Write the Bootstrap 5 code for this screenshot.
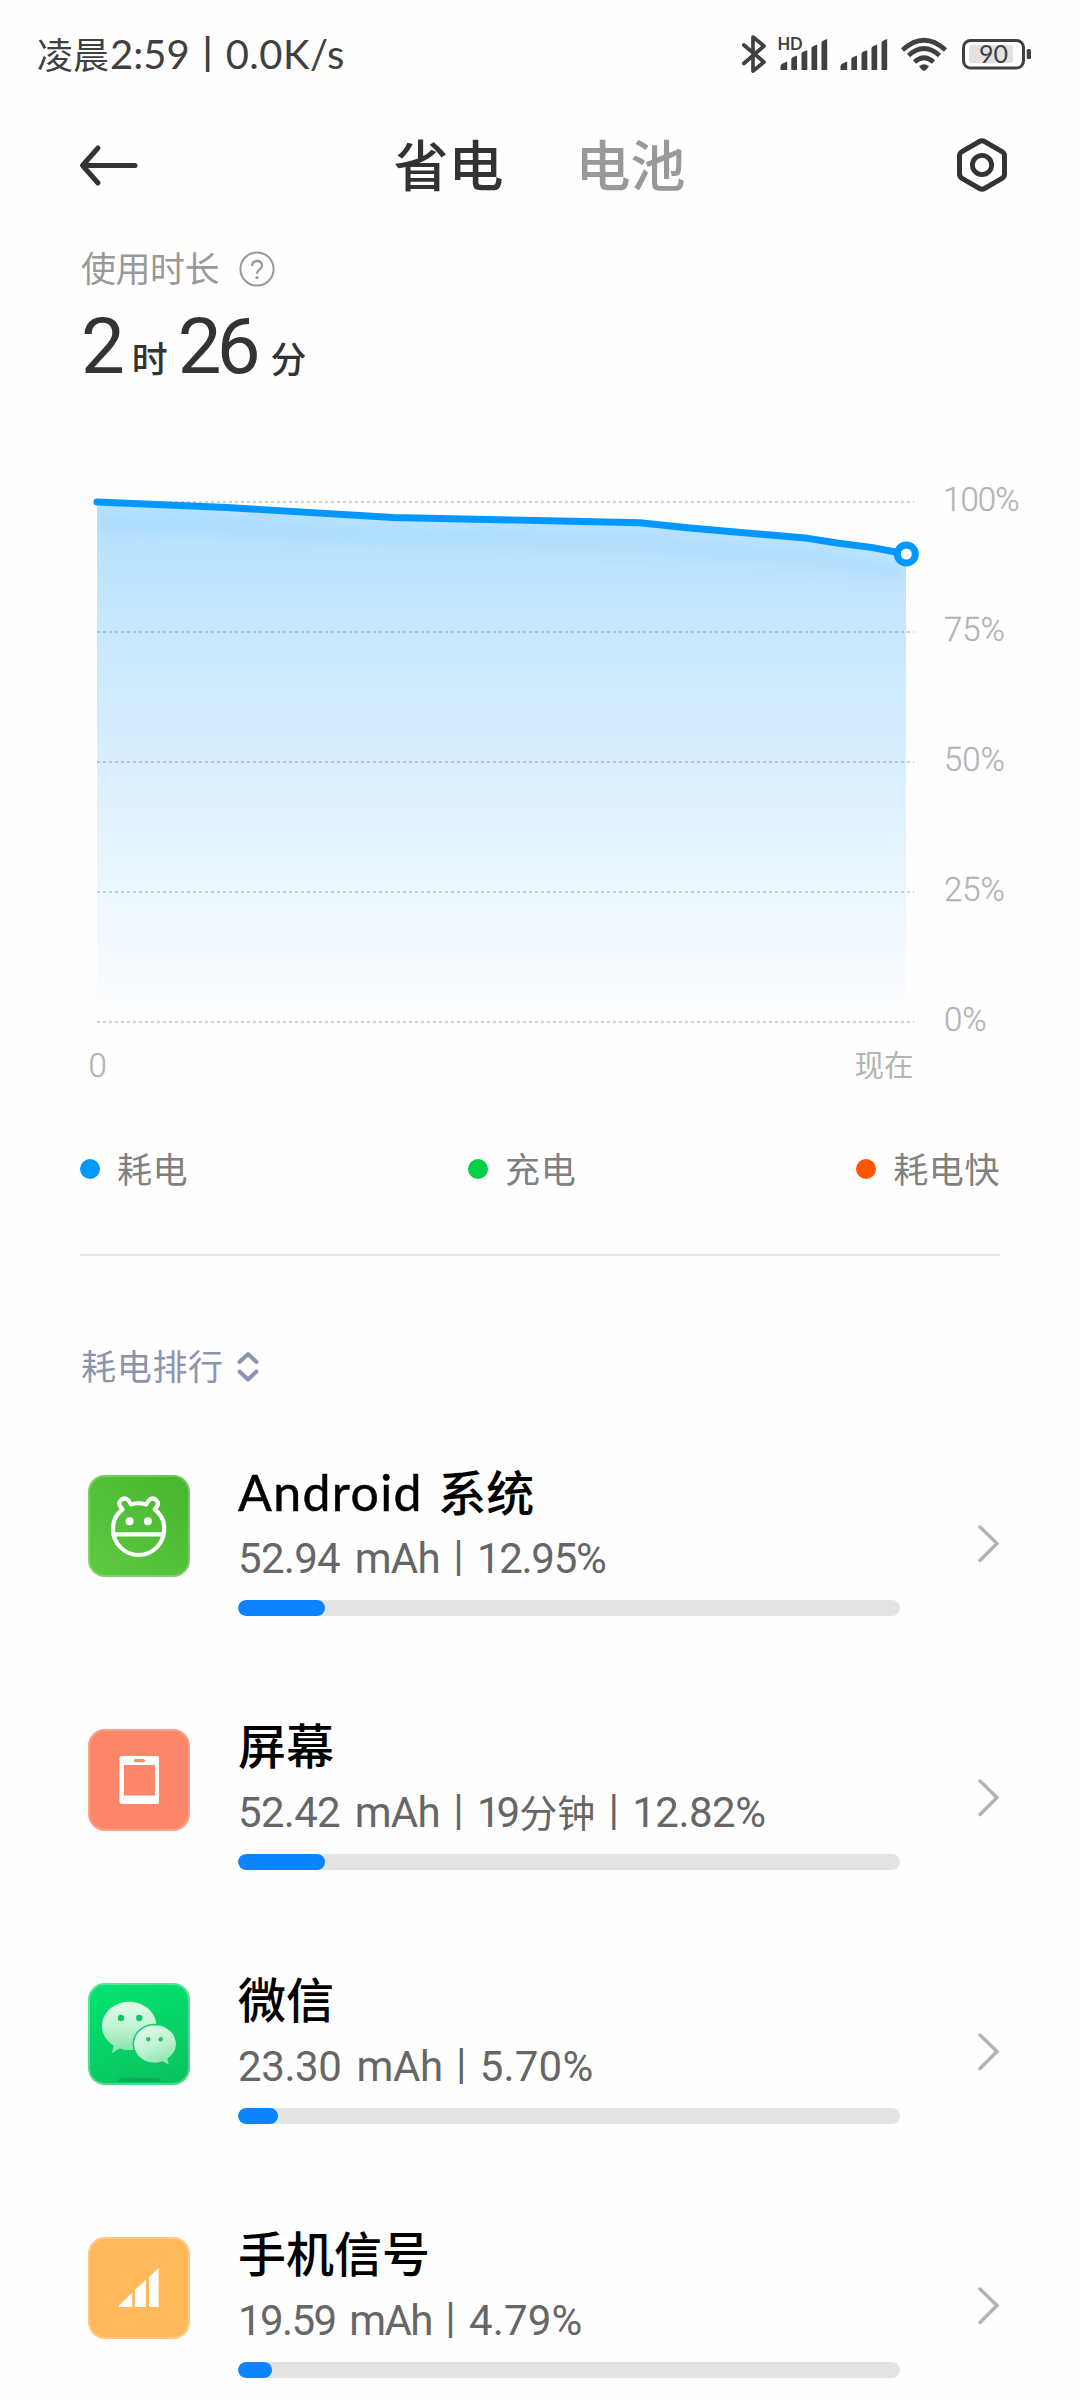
<!DOCTYPE html>
<html lang="zh-CN">
<head>
<meta charset="utf-8">
<meta name="viewport" content="width=device-width, initial-scale=1">
<title>省电</title>
<link href="https://cdn.jsdelivr.net/npm/bootstrap@5.3.0/dist/css/bootstrap.min.css" rel="stylesheet">
<style>
body{background:#fefefe;color:#333;font-family:Lato,"Noto Sans CJK SC",sans-serif;font-weight:400}
svg{display:block;flex:none}
.screen{width:1080px;height:2400px;white-space:nowrap}
.status{height:108px;padding:0 48px 0 37px;font-size:40px;color:#404040}
.status .cn{font-size:36px;margin-right:1px}
.status .rate{letter-spacing:.5px}
.pipe{display:inline-block;width:37px;text-align:center;font-family:Roboto,sans-serif;font-size:43px;font-weight:400;line-height:1;vertical-align:3px;letter-spacing:0}
.status .pipe{width:36px;font-weight:500}
.head{height:114px;padding:0 72px 0 79px;color:#333}
.tabs{font-size:55px;font-weight:500;gap:72px;line-height:114px;margin-right:16px}
.tab-off{color:#999}
.usage{padding:26px 80px 0 81px;font-size:35px;color:#999}
.usage .line{height:41px;line-height:41px;gap:20px;letter-spacing:-.5px}
.total{height:109px;line-height:109px;padding-left:81px;font-size:78px;color:#333}
.total .unit{font-size:36px;font-weight:500}
.total .hour{margin:0 10px 0 12px}
.total .mins,.total .h-num{font-family:Roboto,sans-serif}
.total .mins{letter-spacing:-5px;margin-right:15px}
.total .h-num{letter-spacing:-5px}
.axis{font-family:Roboto,"Noto Sans CJK SC",sans-serif;font-size:33px;fill:#b3b3b3;font-weight:300;stroke:#b3b3b3;stroke-width:.3px;letter-spacing:-.9px}
.axis .two{letter-spacing:-.1px}
.axis .now{font-size:29.5px;stroke:none;letter-spacing:0;font-weight:400}
.legend{height:142px;margin:0 80px;font-size:35px;color:#808080;letter-spacing:.6px}
.legend .gap-key{gap:17px}
.dot{width:20px;height:20px;border-radius:50%;margin-top:-1px}
.rule{height:2px;margin:14px 80px 0;background:#e5e5e5}
.rank{padding:80px 81px 20px;font-size:35px;color:#8c93b1}
.rank .line{height:61px;line-height:61px;gap:13px;letter-spacing:.7px}
.app{height:254px;padding:0 80px 0 88px}
.tile{margin-top:58px}
.info{width:662px;margin:43px 0 0 48px}
.name{height:64px;line-height:64px;font-size:48px;font-weight:500;color:#000}
.name .en{font-size:50px;letter-spacing:1.4px;word-spacing:1px;font-weight:400;-webkit-text-stroke:.5px #000}
.detail{height:65px;line-height:67px;font-size:42px;color:#666}
.num{font-family:Roboto,"Noto Sans CJK SC",sans-serif}
.mah{letter-spacing:-.7px;word-spacing:5px}
.mah.loose{letter-spacing:-.4px}
.mah.tight{letter-spacing:-1.6px}
.pct{letter-spacing:-1.3px}
.pct.mid{letter-spacing:-.5px}
.pct.wide{letter-spacing:.2px}
.mins19{letter-spacing:-4px;margin-right:3px}
.detail .cn{font-size:38px;letter-spacing:0}
.app .progress{height:16px;margin-top:11px;background:#e3e3e3;border-radius:8px}
.app .progress-bar{background:#0d84ff;border-radius:8px}
</style>
</head>
<body>
<div class="screen overflow-hidden d-flex flex-column">
  <div class="status d-flex align-items-center justify-content-between flex-shrink-0">
    <div><span class="cn">凌晨</span><span>2:59</span><span class="pipe">|</span><span class="rate">0.0K/s</span></div>
    <svg width="292" height="44" viewBox="740 32 292 44">
      <g fill="none" stroke="#404040" stroke-linecap="round" stroke-linejoin="round">
        <path stroke-width="3.7" d="M743.8 45 764 62 753 71V37L764 46 743.8 63.5"/>
      </g>
      <text x="777.5" y="50" font-size="16.5" font-weight="700" textLength="25" fill="#404040">HD</text>
      <g id="bars" fill="#404040">
        <path d="M780.5 66.5q0-2 2-3l4.700-2v8.500h-6.700z"/>
        <path d="M791.300 59.500q0-1.500 1.500-2.300l4.200-1.700V70h-5.700z"/>
        <path d="M801.500 54q0-1.500 1.500-2.200l4.300-1.500V70h-5.800z"/>
        <path d="M811.500 48.500q0-1.500 1.500-2.200l4.200-1.800V70h-5.700z"/>
        <path d="M821.500 43q0-1.500 1.500-2.300l4.200-1.700V70h-5.700z"/>
      </g>
      <use href="#bars" x="60"/>
      <g fill="none" stroke="#404040" stroke-width="4.600">
        <path d="M902.500 50Q924 30.500 945.500 50"/>
        <path d="M908.500 55.500Q924 41.500 939.500 55.500"/>
        <path d="M914.500 62Q924 53.500 933.500 62"/>
      </g>
      <path fill="#404040" d="M919 66.500q5-4.500 10 0l-3.500 3.700q-1.500 1.300-3 0z"/>
      <rect x="963.500" y="40.500" width="60" height="27.500" rx="7" fill="none" stroke="#404040" stroke-width="3"/>
      <rect x="969" y="45" width="44" height="18" rx="3" fill="#e2e2e2"/>
      <rect x="1026.700" y="49" width="4.300" height="10" rx="1.500" fill="#404040"/>
      <text x="979" y="63" font-size="25" textLength="29" fill="#404040">90</text>
    </svg>
  </div>
  <div class="head d-flex align-items-center justify-content-between flex-shrink-0">
    <svg width="60" height="44" viewBox="79 143 60 44"><path d="M135 165.500H83M98 148 82.500 165.500 98 183" fill="none" stroke="#333" stroke-width="5" stroke-linecap="round" stroke-linejoin="round"/></svg>
    <div class="tabs d-flex"><span>省电</span><span class="tab-off">电池</span></div>
    <svg width="52" height="58" viewBox="956 136 52 58"><path d="M979.500 141.500q2.500-1.400 5 0l17.500 10.200q2.500 1.500 2.500 4v18.600q0 2.500-2.500 4L984.500 188.500q-2.500 1.400-5 0l-17.500-10.200q-2.500-1.500-2.500-4v-18.600q0-2.500 2.500-4z" fill="none" stroke="#333" stroke-width="5"/><circle cx="982" cy="165" r="9.600" fill="none" stroke="#333" stroke-width="4.800"/></svg>
  </div>
  <div class="usage flex-shrink-0">
    <div class="line d-flex align-items-center"><span>使用时长</span>
      <svg width="36" height="36" viewBox="0 0 36 36"><circle cx="18" cy="18" r="16.600" fill="none" stroke="#999" stroke-width="2"/><path d="M13.200 15q0-5 4.800-5t5 4.500c0 4-5 4-5 8.300" fill="none" stroke="#999" stroke-width="2.300"/><circle cx="18" cy="26.500" r="1.600" fill="#999"/></svg>
    </div>
  </div>
  <div class="total flex-shrink-0"><span class="h-num">2</span><span class="unit hour">时</span><span class="mins">26</span><span class="unit">分</span></div>

  <svg width="1080" height="700" viewBox="0 398 1080 700">
    <defs>
      <linearGradient id="fade" x1="0" y1="502" x2="0" y2="1022" gradientUnits="userSpaceOnUse"><stop stop-color="#0097ff" stop-opacity=".29"/><stop offset="1" stop-color="#0097ff" stop-opacity="0"/></linearGradient>
      <filter id="soft" x="-10%" y="-100%" width="120%" height="300%"><feGaussianBlur stdDeviation="6"/></filter>
      <clipPath id="area"><path id="areaShape" d="M97 502 227 507.500 393 517.500 560 521 640 522.700 690 528 808 538.300 837 543 873 547.700 906 554V1022H97z"/></clipPath>
    </defs>
    <path d="M97 502H914M97 632H914M97 762H914M97 892H914M97 1022H914" stroke="#000" stroke-opacity=".18" stroke-width="2" stroke-dasharray="3 3"/>
    <use href="#areaShape" fill="url(#fade)"/>
    <g clip-path="url(#area)"><path d="M97 523 227 528 393 538 560 542 640 543 690 549 808 559 906 574" fill="none" stroke="#0080e0" stroke-opacity=".06" stroke-width="20" filter="url(#soft)"/></g>
    <path d="M97 502 227 507.500 393 517.500 560 521 640 522.700 690 528 808 538.300 837 543 873 547.700 906 554" fill="none" stroke="#0097ff" stroke-width="6.900" stroke-linecap="round" stroke-linejoin="round"/>
    <circle cx="906.300" cy="554" r="9" fill="#fff" stroke="#0097ff" stroke-width="7"/>
    <g class="axis">
      <text x="943" y="510.500">100%</text><text class="two" x="944" y="640.500">75%</text><text class="two" x="944" y="770.500">50%</text><text class="two" x="944" y="900.500">25%</text><text class="two" x="944" y="1030.500">0%</text>
      <text x="88.500" y="1077">0</text><text class="now" x="854.500" y="1076">现在</text>
    </g>
  </svg>

  <div class="legend d-flex align-items-center justify-content-between flex-shrink-0">
    <div class="d-flex align-items-center gap-key"><span class="dot" style="background:#0097ff"></span>耗电</div>
    <div class="d-flex align-items-center gap-key"><span class="dot" style="background:#00d146"></span>充电</div>
    <div class="d-flex align-items-center gap-key"><span class="dot" style="background:#ff5400"></span>耗电快</div>
  </div>
  <div class="rule flex-shrink-0"></div>
  <div class="rank flex-shrink-0">
    <div class="line d-flex align-items-center"><span>耗电排行</span>
      <svg width="22" height="32" viewBox="0 0 22 32"><path d="M2.500 11 11 3l8.500 8M2.500 20.500l8.500 8 8.500-8" fill="none" stroke="#8c93b1" stroke-width="4" stroke-linecap="round" stroke-linejoin="round"/></svg>
    </div>
  </div>

  <div class="app d-flex align-items-start flex-shrink-0">
    <svg class="tile" width="102" height="102" viewBox="0 0 102 102">
      <defs><linearGradient id="leaf" x1="0" y1="1" x2="1" y2="0"><stop stop-color="#60c944"/><stop offset="1" stop-color="#45b62d"/></linearGradient></defs>
      <rect width="102" height="102" rx="17" fill="url(#leaf)"/><rect x="1" y="1" width="100" height="100" rx="16" fill="none" stroke="#fff" stroke-opacity=".22" stroke-width="2"/>
      <path d="M43 29.500 40.500 25.500Q37.500 22 33.500 24.500 30 27.500 32 31L34.500 34.500C27 40 25 47 25 54A25.600 26 0 0 0 76.200 54C76.200 47 74.200 40 66.700 34.500L69.200 31Q71.200 27.500 67.700 24.500 63.700 22 60.700 25.500L58.200 29.500Q50.600 27 43 29.500ZM26 59.300H75" fill="none" stroke="#fff" stroke-width="4.200" stroke-linejoin="round"/>
      <circle cx="41.600" cy="46.300" r="4" fill="#fff"/><circle cx="59.900" cy="46.300" r="4" fill="#fff"/>
    </svg>
    <div class="info">
      <div class="name"><span class="en">Android </span>系统</div>
      <div class="detail"><span class="num mah">52.94 mAh</span><span class="pipe">|</span><span class="num pct">12.95%</span></div>
      <div class="progress"><div class="progress-bar" style="width:13.14%"></div></div>
    </div>
    <svg class="ms-auto align-self-center" width="22" height="42" viewBox="0 0 22 42"><path d="M2 4 19 20.500 2 37.500" fill="none" stroke="#b3b3b3" stroke-width="3.500" stroke-linecap="round"/></svg>
  </div>

  <div class="app d-flex align-items-start flex-shrink-0">
    <svg class="tile" width="102" height="102" viewBox="0 0 102 102">
      <rect width="102" height="102" rx="17" fill="#fb8669"/><rect x="1" y="1" width="100" height="100" rx="16" fill="none" stroke="#fff" stroke-opacity=".22" stroke-width="2"/>
      <rect x="31.500" y="27" width="39.500" height="48" rx="2" fill="#fff"/><rect x="36" y="36" width="31" height="30.500" fill="#fb8669"/><rect x="46" y="30" width="11" height="3.300" rx="1.600" fill="#fb8669"/>
    </svg>
    <div class="info">
      <div class="name">屏幕</div>
      <div class="detail"><span class="num mah">52.42 mAh</span><span class="pipe">|</span><span class="num mins19">19</span><span class="cn">分钟</span><span class="pipe">|</span><span class="num pct mid">12.82%</span></div>
      <div class="progress"><div class="progress-bar" style="width:13.14%"></div></div>
    </div>
    <svg class="ms-auto align-self-center" width="22" height="42" viewBox="0 0 22 42"><path d="M2 4 19 20.500 2 37.500" fill="none" stroke="#b3b3b3" stroke-width="3.500" stroke-linecap="round"/></svg>
  </div>

  <div class="app d-flex align-items-start flex-shrink-0">
    <svg class="tile" width="102" height="102" viewBox="0 0 102 102">
      <defs>
        <linearGradient id="wx" x1=".3" y1="0" x2=".6" y2="1"><stop stop-color="#03e26f"/><stop offset="1" stop-color="#0ac35f"/></linearGradient>
        <linearGradient id="bub" x1=".5" y1="0" x2=".5" y2="1"><stop stop-color="#e2faeb"/><stop offset=".5" stop-color="#bff3d3"/><stop offset="1" stop-color="#7ee3a7"/></linearGradient>
        <linearGradient id="bub2" x1=".2" y1="0" x2=".7" y2="1"><stop stop-color="#dffae9"/><stop offset=".5" stop-color="#c2f3d4"/><stop offset="1" stop-color="#8ae6ae"/></linearGradient>
      </defs>
      <rect width="102" height="102" rx="17" fill="url(#wx)"/><rect x="1" y="1" width="100" height="100" rx="16" fill="none" stroke="#fff" stroke-opacity=".3" stroke-width="2"/>
      <path d="M29 99 31.500 95.500Q32 94.700 33 94.700H69.500Q70.500 94.700 71.200 95.500L73.500 99z" fill="#0ab058"/>
      <path d="M41.300 18.700C56.300 18.700 68.500 29.500 68.500 43S56.300 67.200 41.300 67.200Q36.500 67.200 31.500 65.500L23.800 70.500 25.500 62.500Q14 55 14 43C14 29.500 26.300 18.700 41.300 18.700Z" fill="url(#bub)"/>
      <circle cx="33" cy="35" r="3.200" fill="#16c566"/><circle cx="51.300" cy="35" r="3.200" fill="#16c566"/>
      <path d="M67 42.300C78.600 42.300 88 50.600 88 61Q88 69.500 79.500 75.500L80.600 81.500 74.500 78.300Q71 79.700 67 79.700C55.400 79.700 46 71.400 46 61S55.400 42.300 67 42.300Z" fill="url(#bub2)"/>
      <path d="M48 71Q45.300 66.500 45.300 61C45.300 50 55 41.500 67 41.500L70 41.700" fill="none" stroke="#17cc69" stroke-width="1.500"/>
      <circle cx="60.200" cy="56.300" r="2.200" fill="#16c566"/><circle cx="72.700" cy="56.300" r="2.200" fill="#16c566"/>
    </svg>
    <div class="info">
      <div class="name">微信</div>
      <div class="detail"><span class="num mah loose">23.30 mAh</span><span class="pipe">|</span><span class="num pct wide">5.70%</span></div>
      <div class="progress"><div class="progress-bar" style="width:6.040%"></div></div>
    </div>
    <svg class="ms-auto align-self-center" width="22" height="42" viewBox="0 0 22 42"><path d="M2 4 19 20.500 2 37.500" fill="none" stroke="#b3b3b3" stroke-width="3.500" stroke-linecap="round"/></svg>
  </div>

  <div class="app d-flex align-items-start flex-shrink-0">
    <svg class="tile" width="102" height="102" viewBox="0 0 102 102">
      <rect width="102" height="102" rx="17" fill="#ffb95a"/><rect x="1" y="1" width="100" height="100" rx="16" fill="none" stroke="#fff" stroke-opacity=".22" stroke-width="2"/>
      <path d="M31 70v-1.500L44.300 55.500V70zM47 70V53L58 42.500V70zM61 70V40L70.600 31V70z" fill="#fff"/>
    </svg>
    <div class="info">
      <div class="name">手机信号</div>
      <div class="detail"><span class="num mah tight">19.59 mAh</span><span class="pipe">|</span><span class="num pct wide">4.79%</span></div>
      <div class="progress"><div class="progress-bar" style="width:5.140%"></div></div>
    </div>
    <svg class="ms-auto align-self-center" width="22" height="42" viewBox="0 0 22 42"><path d="M2 4 19 20.500 2 37.500" fill="none" stroke="#b3b3b3" stroke-width="3.500" stroke-linecap="round"/></svg>
  </div>
</div>
<script src="https://cdn.jsdelivr.net/npm/bootstrap@5.3.0/dist/js/bootstrap.bundle.min.js"></script>
</body>
</html>
